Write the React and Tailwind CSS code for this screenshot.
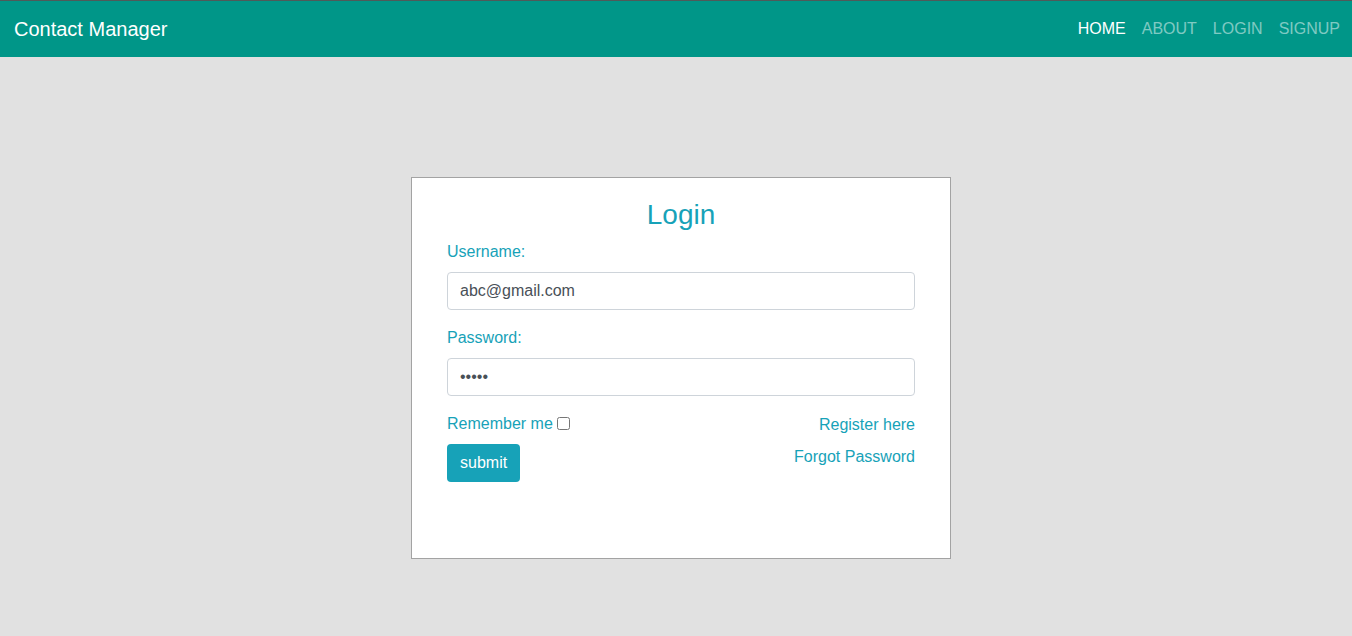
export default function App() {
  return (
    <div className="min-h-screen bg-[#e1e1e1] font-['Liberation_Sans',Arial,sans-serif]">
      {/* Navbar */}
      <nav className="h-[57px] bg-[#009688] border-t border-[#4f5a59] flex items-center justify-between pl-[14px] pr-[12px]">
        <span className="text-[20px] text-white">Contact Manager</span>
        <div className="flex gap-4 text-[16px]">
          <a className="text-white">HOME</a>
          <a className="text-white/50">ABOUT</a>
          <a className="text-white/50">LOGIN</a>
          <a className="text-white/50">SIGNUP</a>
        </div>
      </nav>

      {/* Login card */}
      <div className="flex justify-center pt-[120px] pl-[10px]">
        <div className="w-[540px] h-[382px] bg-white border border-[#a3a3a3] pt-[20px] px-[35px] text-[#17a2b8] text-[16px]">
          <h2 className="text-[28px] leading-[34px] text-center mb-2">Login</h2>

          <label className="block leading-6 mb-2">Username:</label>
          <input
            type="text"
            defaultValue="abc@gmail.com"
            className="block w-full h-[38px] px-3 border border-[#ced4da] rounded bg-white text-[#495057] outline-none"
          />

          <label className="block leading-6 mt-4 mb-2">Password:</label>
          <input
            type="password"
            defaultValue="abcde"
            className="block w-full h-[38px] px-3 border border-[#ced4da] rounded bg-white text-[#495057] outline-none"
          />

          <div className="flex justify-between mt-4">
            <div className="flex flex-col items-start gap-2">
              <div className="leading-6 flex items-center">
                <span>Remember me</span>
                <input type="checkbox" className="w-[13px] h-[13px] ml-[4px] -mt-[2px]" />
              </div>
              <button className="h-[38px] px-[13px] rounded bg-[#17a2b8] text-white">submit</button>
            </div>
            <div className="flex flex-col items-end gap-2 leading-6 pt-px">
              <a>Register here</a>
              <a>Forgot Password</a>
            </div>
          </div>
        </div>
      </div>
    </div>
  )
}
